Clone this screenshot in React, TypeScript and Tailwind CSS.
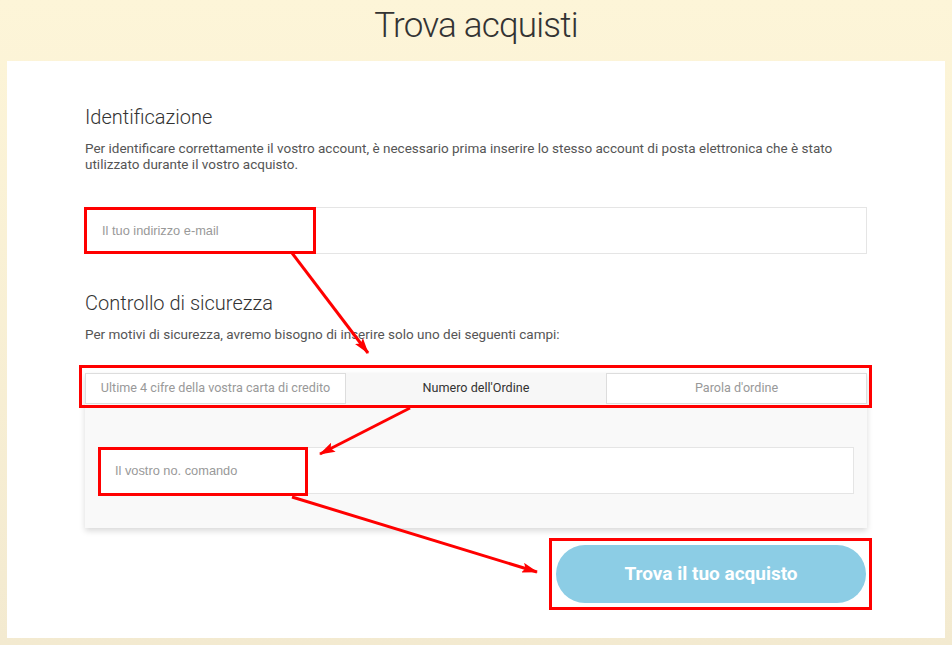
import React from 'react';

function Arrows() {
  return (
    <svg className="pointer-events-none absolute left-0 top-0" width="952" height="645" viewBox="0 0 952 645">
      <defs>
        <marker id="ah" markerWidth="16" markerHeight="10" refX="15" refY="5" orient="auto" markerUnits="userSpaceOnUse">
          <path d="M0 0 L16 5 L0 10 L3 5 z" fill="#ff0000" />
        </marker>
      </defs>
      <line x1="292" y1="253" x2="368" y2="353" stroke="#ff0000" strokeWidth="3" markerEnd="url(#ah)" />
      <line x1="410" y1="408" x2="320" y2="454" stroke="#ff0000" strokeWidth="3" markerEnd="url(#ah)" />
      <line x1="292" y1="497" x2="537" y2="572" stroke="#ff0000" strokeWidth="3" markerEnd="url(#ah)" />
    </svg>
  );
}

export default function App() {
  return (
    <div className="relative h-[645px] w-[952px] overflow-hidden bg-gradient-to-b from-[#fdf5d8] to-[#f3ead0] font-['Roboto',sans-serif]">
      <header className="flex h-[61px] items-center justify-center pb-[8px]">
        <h1 className="text-[35px] font-light tracking-[-0.8px] text-[#333]">Trova acquisti</h1>
      </header>
      <main className="mx-[7px] h-[577px] bg-white px-[78px] pt-[41px]">
        <h2 className="text-[20px] font-light text-[#333]">Identificazione</h2>
        <p className="mt-[8px] text-[13.5px] leading-[16px] text-[#555]">
          Per identificare correttamente il vostro account, è necessario prima inserire lo stesso account di posta elettronica che è stato utilizzato durante il vostro acquisto.
        </p>
        <div className="relative mt-[35px] flex h-[47px] items-center border border-[#e5e5e5] pl-[16px] font-['Liberation_Sans',sans-serif] text-[12.8px] text-[#999]">
          Il tuo indirizzo e-mail
          <div className="absolute -left-[2px] -top-[1px] h-[47px] w-[232px] border-[3px] border-[#ff0000]" />
        </div>

        <h2 className="mt-[34px] text-[20px] font-light text-[#333]">Controllo di sicurezza</h2>
        <p className="mt-[6px] text-[13.5px] text-[#555]">
          Per motivi di sicurezza, avremo bisogno di inserire solo uno dei seguenti campi:
        </p>

        <div className="relative mt-[29px] shadow-[0_3px_6px_rgba(0,0,0,0.15)]">
          <div className="relative flex h-[31px] bg-[#f7f7f7] text-[12.6px]">
            <div className="flex w-[261px] items-center justify-center border border-[#ddd] bg-white text-[#999]">Ultime 4 cifre della vostra carta di credito</div>
            <div className="flex flex-1 items-center justify-center text-[#333]">Numero dell'Ordine</div>
            <div className="flex w-[261px] items-center justify-center border border-[#ddd] bg-white text-[#999]">Parola d'ordine</div>
            <div className="absolute -left-[6px] -top-[8px] h-[43px] w-[793px] border-[3px] border-[#ff0000]" />
          </div>
          <div className="h-[124px] bg-[#f9f9f9] px-[13px] pt-[43px]">
            <div className="relative flex h-[47px] items-center border border-[#e5e5e5] bg-white pl-[16px] font-['Liberation_Sans',sans-serif] text-[12.8px] text-[#999]">
              Il vostro no. comando
              <div className="absolute -left-[1px] -top-[1px] h-[49px] w-[210px] border-[3px] border-[#ff0000]" />
            </div>
          </div>
        </div>

        <div className="-mr-[5px] mt-[10px] flex justify-end">
          <div className="border-[3px] border-[#ff0000] py-[4px] pl-[4px] pr-[3px]">
            <button className="flex h-[58px] w-[310px] shrink-0 items-center justify-center rounded-full bg-[#8ccde5] text-[19px] font-bold text-white">
              Trova il tuo acquisto
            </button>
          </div>
        </div>
      </main>
      <Arrows />
    </div>
  );
}
